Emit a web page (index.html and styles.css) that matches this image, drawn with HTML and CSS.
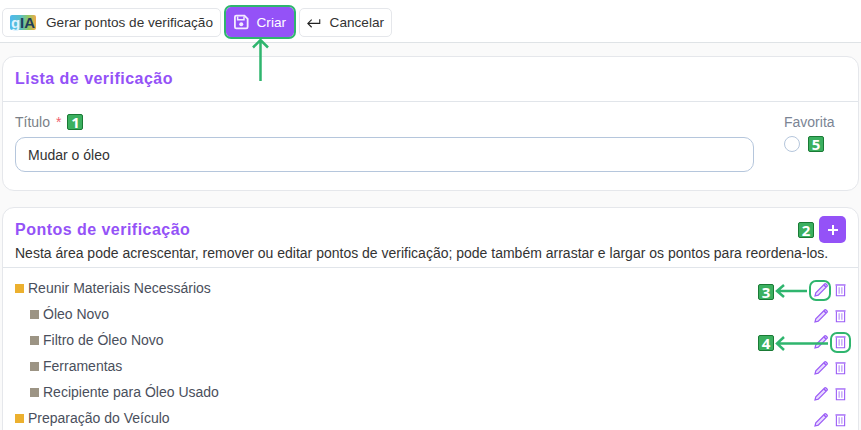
FILE: index.html
```html
<!DOCTYPE html>
<html lang="pt">
<head>
<meta charset="utf-8">
<title>Lista de verificação</title>
<link rel="stylesheet" href="styles.css">
</head>
<body>
<div class="page">
  <header class="toolbar">
    <button class="btn btn-gia"><span class="gia"><span class="gia-g">g</span>IA</span><span class="btn-label">Gerar pontos de verificação</span></button>
    <button class="btn btn-primary">
      <svg class="ico-save" viewBox="0 0 16 16" width="16" height="16"><path d="M2.500 1h9l3.500 3.500v9a1.500 1.500 0 0 1-1.500 1.500h-11A1.500 1.500 0 0 1 1 13.500v-11A1.500 1.500 0 0 1 2.500 1z" fill="none" stroke="#f3ebff" stroke-width="2"/><path d="M4 2v3.500h7V2" fill="none" stroke="#f3ebff" stroke-width="1.600"/><circle cx="8" cy="10.500" r="2.200" fill="#f3ebff"/></svg>
      <span>Criar</span>
    </button>
    <button class="btn btn-cancel">
      <svg viewBox="0 0 16 12" width="16" height="12"><path d="M15 1.500v5H1M5.500 2L1 6.500 5.500 11" fill="none" stroke="#222" stroke-width="1.300"/></svg>
      <span>Cancelar</span>
    </button>
  </header>

  <section class="card card-list">
    <h2 class="card-title head-one">Lista de verificação</h2>
    <div class="form">
      <div class="field-main">
        <div class="label">Título <span class="req">*</span><span class="tag">1</span></div>
        <input class="input" type="text" value="Mudar o óleo">
      </div>
      <div class="field-fav">
        <div class="label label-fav">Favorita</div>
        <div class="fav-row"><span class="radio"></span><span class="tag">5</span></div>
      </div>
    </div>
  </section>

  <section class="card card-points">
    <div class="head-two">
      <div class="head-row">
        <h2 class="card-title">Pontos de verificação</h2>
        <div class="add-wrap"><span class="tag">2</span><button class="add"><svg viewBox="0 0 12 12" width="12" height="12"><path d="M6 1v10M1 6h10" stroke="#fff" stroke-width="2"/></svg></button></div>
      </div>
      <p class="desc">Nesta área pode acrescentar, remover ou editar pontos de verificação; pode também arrastar e largar os pontos para reordena-los.</p>
    </div>
    <ul class="tree">
      <li class="row"><span class="sq sq-y"></span><span class="txt">Reunir Materiais Necessários</span>
        <span class="acts"><svg class="i-edit"><use href="#pen"/></svg><svg class="i-del"><use href="#bin"/></svg></span></li>
      <li class="row sub"><span class="sq"></span><span class="txt">Óleo Novo</span>
        <span class="acts"><svg class="i-edit"><use href="#pen"/></svg><svg class="i-del"><use href="#bin"/></svg></span></li>
      <li class="row sub"><span class="sq"></span><span class="txt">Filtro de Óleo Novo</span>
        <span class="acts"><svg class="i-edit"><use href="#pen"/></svg><svg class="i-del"><use href="#bin"/></svg></span></li>
      <li class="row sub"><span class="sq"></span><span class="txt">Ferramentas</span>
        <span class="acts"><svg class="i-edit"><use href="#pen"/></svg><svg class="i-del"><use href="#bin"/></svg></span></li>
      <li class="row sub"><span class="sq"></span><span class="txt">Recipiente para Óleo Usado</span>
        <span class="acts"><svg class="i-edit"><use href="#pen"/></svg><svg class="i-del"><use href="#bin"/></svg></span></li>
      <li class="row"><span class="sq sq-y"></span><span class="txt">Preparação do Veículo</span>
        <span class="acts"><svg class="i-edit"><use href="#pen"/></svg><svg class="i-del"><use href="#bin"/></svg></span></li>
    </ul>
  </section>
</div>

<svg class="defs" width="0" height="0">
  <symbol id="pen" viewBox="0 0 14 14"><path d="M1 13l.8-3.200L10.600 1a1 1 0 0 1 1.400 0l1 1a1 1 0 0 1 0 1.400L4.200 12.200z" fill="#e9dcff" stroke="#9b5cf6" stroke-width="1.200"/><path d="M10 2l2 2" stroke="#9b5cf6" stroke-width="1.600"/></symbol>
  <symbol id="bin" viewBox="0 0 12 14"><path d="M.5 1.500h11" stroke="#9b5cf6" stroke-width="1.400"/><path d="M1.500 2v11.200h9V2" fill="none" stroke="#9b5cf6" stroke-width="1.200"/><path d="M4.500 4v7M7.500 4v7" stroke="#b48cf8" stroke-width="1.200"/></symbol>
</svg>

<!-- tutorial annotations laid over the page -->
<span class="hl hl-criar"></span>
<span class="hl hl-pen"></span>
<span class="hl hl-bin"></span>
<svg class="arrows" width="861" height="430" viewBox="0 0 861 430">
  <g fill="none" stroke="#2fb56e" stroke-width="2.500">
    <path d="M260.500 81V40M253 47.500l7.500-7.500 7.500 7.500"/>
    <path d="M807 291H777M784 285l-7 6 7 6"/>
    <path d="M828 343.500H777M784 337l-7 6.500 7 6.500"/>
  </g>
</svg>
<span class="tag tag-float tag-3">3</span>
<span class="tag tag-float tag-4">4</span>
</body>
</html>
```

FILE: styles.css
```css
* { box-sizing: border-box; }
html, body { margin: 0; padding: 0; }
body {
  width: 861px;
  height: 430px;
  overflow: hidden;
  position: relative;
  background: #fafafa;
  font-family: "Liberation Sans", Arial, sans-serif;
  font-size: 14px;
  color: #333;
}
.page { display: flex; flex-direction: column; }
.defs { position: absolute; }

.toolbar {
  height: 43px;
  background: #fff;
  border-bottom: 1px solid #dfe3e6;
  display: flex;
  align-items: flex-start;
  gap: 5px;
  padding: 8px 0 0 2px;
}
.btn {
  height: 29px;
  padding: 0 7px;
  display: flex;
  align-items: center;
  background: #fff;
  border: 1px solid #e5e7eb;
  border-radius: 5px;
  font: 13.6px "Liberation Sans", Arial, sans-serif;
  color: #333;
}
.btn-gia { width: 219px; }
.gia {
  width: 26px;
  height: 15px;
  margin-right: 10px;
  border-radius: 2px;
  background: linear-gradient(90deg, #4fb9ee 0%, #58bfc8 40%, #8fc763 70%, #f0a84a 100%);
  color: #1f3d5c;
  font: 700 15px/15px "Liberation Sans", Arial, sans-serif;
  text-align: center;
}
.gia-g { color: #dff3ff; }
.btn-primary {
  height: 30px;
  margin-top: -1px;
  width: 68px;
  background: #9452f7;
  border-color: #9452f7;
  color: #fff;
  gap: 8px;
}
.btn-cancel { gap: 9px; width: 93px; }

.card {
  margin: 0 2px;
  background: #fff;
  border: 1px solid #e5e7eb;
  border-radius: 12px;
}
.card-list { margin-top: 13px; height: 135px; }
.card-points { margin-top: 16px; height: 240px; }
.card-title {
  margin: 0;
  font-size: 16px;
  line-height: 20px;
  font-weight: 700;
  letter-spacing: .47px;
  color: #9452f7;
}
.head-one {
  height: 45px;
  padding: 12px 12px 0;
  border-bottom: 1px solid #e1e5ea;
}
.form {
  display: flex;
  justify-content: space-between;
  padding: 12px 24px 0 12px;
}
.field-main { width: 739px; }
.label {
  height: 16px;
  line-height: 16px;
  color: #7a7f87;
  display: flex;
  align-items: center;
}
.req { color: #f0616d; margin-left: 6px; }
.input {
  display: block;
  width: 100%;
  height: 35px;
  margin-top: 7px;
  padding: 0 12px;
  border: 1px solid #b5c6dc;
  border-radius: 10px;
  font: 14px "Liberation Sans", Arial, sans-serif;
  color: #333;
  background: #fff;
  outline: none;
}
.field-fav { width: 50px; }
.label-fav { white-space: nowrap; color: #7b8494; }
.fav-row { display: flex; align-items: center; margin-top: 6px; }
.radio {
  width: 16px;
  height: 16px;
  border: 1px solid #b5c6dc;
  border-radius: 50%;
  margin-right: 8px;
}
.tag {
  display: inline-block;
  width: 16px;
  height: 16px;
  background: #3bb060;
  border: 1px solid #1a7a35;
  border-radius: 2px;
  color: #fff;
  font: 700 15px/14px "Open Sans", "Liberation Sans", sans-serif;
  text-align: center;
}
.field-main .tag { margin-left: 6px; }

.head-two {
  height: 60px;
  padding: 12px 12px 0;
  border-bottom: 1px solid #e1e5ea;
}
.head-row {
  display: flex;
  justify-content: space-between;
  align-items: flex-start;
  height: 20px;
}
.add-wrap {
  display: flex;
  align-items: center;
  gap: 5px;
  margin-top: -4px;
}
.add {
  width: 27px;
  height: 27px;
  padding: 0;
  border: 0;
  border-radius: 5px;
  background: #9452f7;
  display: flex;
  align-items: center;
  justify-content: center;
}
.desc {
  margin: 5px 0 0;
  line-height: 17px;
  color: #333;
  white-space: nowrap;
}
.tree {
  list-style: none;
  margin: 0;
  padding: 7px 12px 0;
}
.row {
  height: 26px;
  display: flex;
  align-items: center;
  color: #4a4f5c;
}
.row.sub { padding-left: 15px; }
.sq {
  width: 9px;
  height: 9px;
  margin-right: 4px;
  margin-top: 1px;
  background: #9c9484;
}
.sq-y { background: #ecb02e; }
.acts {
  margin-left: auto;
  display: flex;
  align-items: center;
  gap: 7px;
  padding-top: 4px;
}
.i-edit { width: 14px; height: 14px; }
.i-del { width: 11px; height: 14px; }

.hl {
  position: absolute;
  border: 2px solid #2fb56e;
  border-radius: 7px;
  background: transparent;
}
.hl-criar { left: 224px; top: 5px; width: 72px; height: 34px; }
.hl-pen { left: 809px; top: 280px; width: 22px; height: 21px; }
.hl-bin { left: 830px; top: 332px; width: 21px; height: 21px; }
.arrows { position: absolute; left: 0; top: 0; pointer-events: none; }
.tag-float { position: absolute; left: 758px; }
.tag-3 { top: 284px; }
.tag-4 { top: 335px; }
```
